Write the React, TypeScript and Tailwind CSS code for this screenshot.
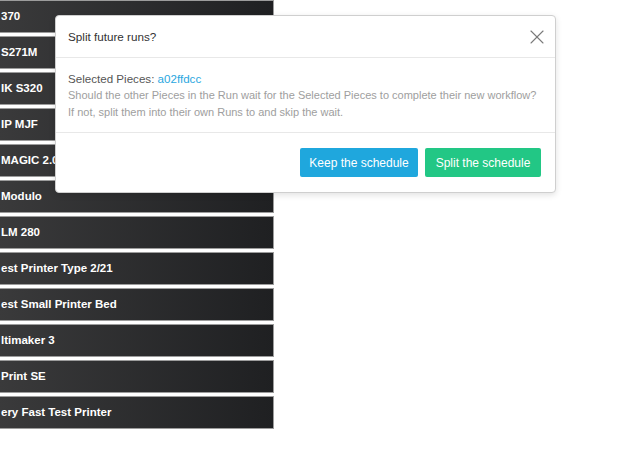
import { X } from 'lucide-react'

const printers = [
    '370',
    'S271M',
    'IK S320',
    'IP MJF',
    'MAGIC 2.0',
    'Modulo',
    'LM 280',
    'est Printer Type 2/21',
    'est Small Printer Bed',
    'ltimaker 3',
    'Print SE',
    'ery Fast Test Printer'
]

export default function App() {
    return (
        <div className="relative w-[644px] h-[456px] bg-white overflow-hidden font-['Liberation_Sans',Arial,sans-serif]">
            {/* printer list, scrolled to the left */}
            <div className="flex flex-col gap-[3px] w-[274px]">
                {printers.map(name => (
                    <div
                        key={name}
                        className="h-[33px] flex items-center border border-[#9c9c9c] border-l-0 bg-linear-to-r from-[#3a3a3b] to-[#1f2022] text-white text-[11.5px] font-bold pl-[1px] whitespace-nowrap overflow-hidden">
                        {name}
                    </div>
                ))}
            </div>

            {/* modal */}
            <div className="absolute left-[55px] top-[15px] w-[501px] bg-white border border-[#cfcfcf] rounded-[4px] shadow-[0_2px_6px_rgba(0,0,0,0.12)]">
                <div className="flex items-center justify-between h-[42px] pl-[12px] pr-[6px] border-b border-[#e8e8e8]">
                    <h4 className="text-[11.7px] text-[#333]">Split future runs?</h4>
                    <X className="w-[24px] h-[24px] text-[#7a7a7a]" strokeWidth={1.1} />
                </div>
                <div className="px-[12px] pt-[12px] pb-[11px] border-b border-[#e8e8e8] leading-[17px]">
                    <p className="text-[11.6px] text-[#555]">
                        Selected Pieces: <span className="text-[#2aa7e0]">a02ffdcc</span>
                    </p>
                    <p className="text-[11px] text-[#9e9e9e]">
                        Should the other Pieces in the Run wait for the Selected Pieces to complete their new workflow?
                        <br />
                        If not, split them into their own Runs to and skip the wait.
                    </p>
                </div>
                <div className="flex justify-end gap-[7px] px-[14px] py-[15px]">
                    <button className="h-[29px] w-[118px] rounded-[2px] bg-[#1fa7dd] text-white text-[12px]">Keep the schedule</button>
                    <button className="h-[29px] w-[116px] rounded-[2px] bg-[#22c785] text-white text-[12px]">Split the schedule</button>
                </div>
            </div>
        </div>
    )
}
